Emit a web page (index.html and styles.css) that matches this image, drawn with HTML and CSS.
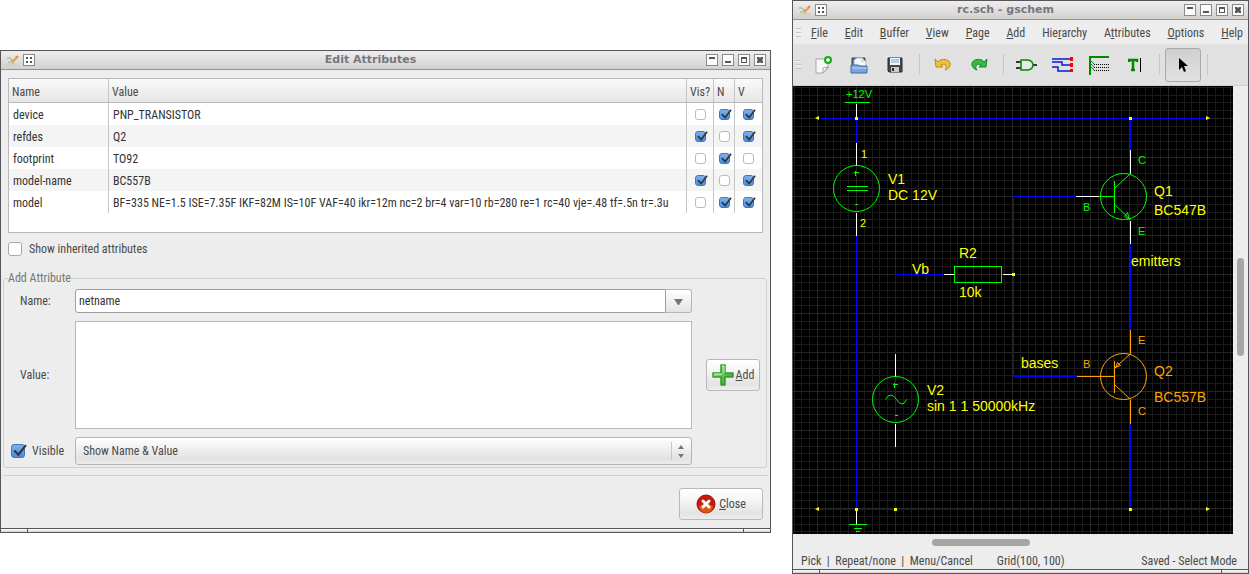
FILE: index.html
```html
<!DOCTYPE html>
<html lang="en">
<head>
  <meta charset="UTF-8">
  <meta name="viewport" content="width=device-width, initial-scale=1.0">
  <title>rc.sch - gschem</title>
  <link rel="stylesheet" href="styles.css">
</head>
<body>
  <!-- Shared icons -->
  <svg class="defs" width="0" height="0" aria-hidden="true">
    <symbol id="app-icon" viewBox="0 0 13 13">
      <path d="M1 2h10v9H1z" fill="#e4e2dc"/>
      <path d="M0 11l1-2h11l1 3H0z" fill="#d5d1c8"/>
      <path d="M1 4h3l2 2-2 2H2M6 6h2" fill="none" stroke="#9aae88"/>
      <path d="M6 9l5-6" stroke="#eaa04e" stroke-width="2"/>
      <path d="M10 4l2-2" stroke="#e08a5a" stroke-width="2"/>
    </symbol>
    <symbol id="win-menu" viewBox="0 0 10 10"><path d="M2 2h2v2H2zM6 2h2v2H6zM2 6h2v2H2zM6 6h2v2H6z" fill="#55565a"/></symbol>
    <symbol id="win-shade" viewBox="0 0 10 10"><path d="M2 2h6v2H2z" fill="#55565a"/></symbol>
    <symbol id="win-min" viewBox="0 0 10 10"><path d="M2 6h6v2H2z" fill="#55565a"/></symbol>
    <symbol id="win-max" viewBox="0 0 10 10"><path d="M2 2h6v6H2zM3 4v3h4V4z" fill="#55565a" fill-rule="evenodd"/></symbol>
    <symbol id="win-close" viewBox="0 0 10 10"><path d="M2 2h2l1 1 1-1h2v2L7 5l1 1v2H6L5 7 4 8H2V6l1-1-1-1z" fill="#55565a"/></symbol>
  </svg>

  <div class="desktop">
    <!-- Edit Attributes dialog -->
    <section class="window dialog">
      <header class="titlebar">
        <svg class="app-icon"><use href="#app-icon"/></svg>
        <button class="win-btn" aria-label="Window menu"><svg><use href="#win-menu"/></svg></button>
        <h1>Edit Attributes</h1>
        <button class="win-btn" aria-label="Shade"><svg><use href="#win-shade"/></svg></button>
        <button class="win-btn" aria-label="Minimize"><svg><use href="#win-min"/></svg></button>
        <button class="win-btn" aria-label="Maximize"><svg><use href="#win-max"/></svg></button>
        <button class="win-btn" aria-label="Close window"><svg><use href="#win-close"/></svg></button>
      </header>

      <div class="table-box">
        <table>
          <colgroup>
            <col class="col-name"><col><col class="col-vis"><col class="col-n"><col class="col-v">
          </colgroup>
          <thead>
            <tr><th>Name</th><th>Value</th><th>Vis?</th><th>N</th><th>V</th></tr>
          </thead>
          <tbody>
            <tr>
              <td>device</td><td>PNP_TRANSISTOR</td>
              <td class="tick"><input type="checkbox" aria-label="device visible"></td>
              <td class="tick"><input type="checkbox" aria-label="device name" checked></td>
              <td class="tick"><input type="checkbox" aria-label="device value" checked></td>
            </tr>
            <tr>
              <td>refdes</td><td>Q2</td>
              <td class="tick"><input type="checkbox" aria-label="refdes visible" checked></td>
              <td class="tick"><input type="checkbox" aria-label="refdes name"></td>
              <td class="tick"><input type="checkbox" aria-label="refdes value" checked></td>
            </tr>
            <tr>
              <td>footprint</td><td>TO92</td>
              <td class="tick"><input type="checkbox" aria-label="footprint visible"></td>
              <td class="tick"><input type="checkbox" aria-label="footprint name" checked></td>
              <td class="tick"><input type="checkbox" aria-label="footprint value"></td>
            </tr>
            <tr>
              <td>model-name</td><td>BC557B</td>
              <td class="tick"><input type="checkbox" aria-label="model-name visible" checked></td>
              <td class="tick"><input type="checkbox" aria-label="model-name name"></td>
              <td class="tick"><input type="checkbox" aria-label="model-name value" checked></td>
            </tr>
            <tr>
              <td>model</td><td>BF=335 NE=1.5 ISE=7.35F IKF=82M IS=10F VAF=40 ikr=12m nc=2 br=4 var=10 rb=280 re=1 rc=40 vje=.48 tf=.5n tr=.3u</td>
              <td class="tick"><input type="checkbox" aria-label="model visible"></td>
              <td class="tick"><input type="checkbox" aria-label="model name" checked></td>
              <td class="tick"><input type="checkbox" aria-label="model value" checked></td>
            </tr>
          </tbody>
        </table>
      </div>

      <label class="check inherited"><input type="checkbox"> Show inherited attributes</label>

      <fieldset>
        <legend>Add Attribute</legend>
        <div class="add-form">
          <label class="field-label" for="attr-name">Name:</label>
          <div class="combo field">
            <input type="text" id="attr-name" value="netname">
            <button aria-label="Show names"><svg width="9" height="6" viewBox="0 0 9 6"><path d="M0 0h9L5 6H4z" fill="#777"/></svg></button>
          </div>
          <label class="field-label" for="attr-value">Value:</label>
          <textarea class="field" id="attr-value"></textarea>
          <label class="check visible"><input type="checkbox" checked> Visible</label>
          <select class="field" aria-label="Show">
            <option>Show Name &amp; Value</option>
          </select>
          <button class="btn add-btn">
            <svg width="22" height="22" viewBox="0 0 22 22">
              <defs>
                <linearGradient id="plus" x1="0" y1="0" x2="1" y2="1">
                  <stop offset="0" stop-color="#b8ec9c"/><stop offset="1" stop-color="#179a17"/>
                </linearGradient>
              </defs>
              <path d="M9 1h4v8h8v4h-8v8H9v-8H1V9h8z" fill="url(#plus)" stroke="#2f9c2b" stroke-width="1.500" stroke-linejoin="round"/>
              <path d="M10 2h2v7M2 10h8" fill="none" stroke="#d2f5bd"/>
            </svg>
            <span><u>A</u>dd</span>
          </button>
        </div>
      </fieldset>

      <div class="actions">
        <button class="btn close-btn">
          <svg width="20" height="20" viewBox="0 0 20 20">
            <circle cx="10" cy="10" r="9" fill="#c7180c" stroke="#9c0d0d"/>
            <path d="M3 12a7 7 0 0 0 14 0q-7-4-14 0z" fill="#d8590d"/>
            <path d="M7 7l6 6M13 7l-6 6" stroke="#fff" stroke-width="3" stroke-linecap="round"/>
          </svg>
          <span><u>C</u>lose</span>
        </button>
      </div>
      <div class="grip"></div>
    </section>

    <!-- Schematic editor -->
    <section class="window editor">
      <header class="titlebar">
        <svg class="app-icon"><use href="#app-icon"/></svg>
        <button class="win-btn" aria-label="Window menu"><svg><use href="#win-menu"/></svg></button>
        <h1>rc.sch - gschem</h1>
        <button class="win-btn" aria-label="Shade"><svg><use href="#win-shade"/></svg></button>
        <button class="win-btn" aria-label="Minimize"><svg><use href="#win-min"/></svg></button>
        <button class="win-btn" aria-label="Maximize"><svg><use href="#win-max"/></svg></button>
        <button class="win-btn" aria-label="Close window"><svg><use href="#win-close"/></svg></button>
      </header>

      <nav class="menubar">
        <span class="handle"></span>
        <div class="menus">
          <button><u>F</u>ile</button>
          <button><u>E</u>dit</button>
          <button><u>B</u>uffer</button>
          <button><u>V</u>iew</button>
          <button><u>P</u>age</button>
          <button><u>A</u>dd</button>
          <button>Hie<u>r</u>archy</button>
          <button>A<u>t</u>tributes</button>
          <button><u>O</u>ptions</button>
          <button><u>H</u>elp</button>
        </div>
      </nav>

      <div class="toolbar">
        <span class="handle"></span>
        <button class="tool" aria-label="New">
          <svg width="18" height="18" viewBox="0 0 18 18">
            <path d="M2 3h12v9l-5 5H2z" fill="#f7f7f5" stroke="#a5a59f"/>
            <path d="M14 11l-5 1v5z" fill="#fff" stroke="#a5a59f"/>
            <circle cx="14" cy="4" r="4" fill="#1faa1f"/>
            <path d="M14 2v4M12 4h4" stroke="#fff" stroke-width="1.5"/>
          </svg>
        </button>
        <button class="tool" aria-label="Open">
          <svg width="18" height="18" viewBox="0 0 18 18">
            <path d="M2 2h13v10H2z" fill="#3c6396" stroke="#2a4a78"/>
            <path d="M4 4l3-2h5l4 4v5H4z" fill="#f5f6f8" stroke="#b4bac4"/>
            <path d="M11 2v4h4z" fill="#d6dae0"/>
            <path d="M1 9h7l2 1h7v7H1z" fill="#7ba6d8" stroke="#3c6ba6"/>
            <path d="M2 12h15" stroke="#c3d9f1"/>
          </svg>
        </button>
        <button class="tool" aria-label="Save">
          <svg width="16" height="16" viewBox="0 0 16 16">
            <path d="M1 1h14v14H2l-1-1z" fill="#45474f" stroke="#2c2d33"/>
            <path d="M3 1h10v7H3z" fill="#f1f4f8"/>
            <path d="M4 3h8M4 5h8" stroke="#7ea2d4"/>
            <path d="M4 10h8v5H4z" fill="#c9cacc"/>
            <path d="M5 11h2v3H5z" fill="#2c2d33"/>
          </svg>
        </button>
        <span class="sep"></span>
        <button class="tool" aria-label="Undo">
          <svg width="18" height="16" viewBox="0 0 18 16">
            <path d="M1 2l1 8h7L7 8q4-2 5 1 1 2-1 4 6-2 5-7-2-5-10-3L4 5z" fill="#edc13c" stroke="#b98a16" stroke-linejoin="round"/>
          </svg>
        </button>
        <button class="tool" aria-label="Redo">
          <svg width="18" height="16" viewBox="0 0 18 16">
            <path d="M17 2l-1 8H9l2-2Q7 6 6 9q-1 2 1 4Q1 11 2 6q2-5 10-3l2 2z" fill="#38b945" stroke="#15882a" stroke-linejoin="round"/>
          </svg>
        </button>
        <span class="sep"></span>
        <button class="tool" aria-label="Add component">
          <svg width="22" height="14" viewBox="0 0 22 14">
            <path d="M0 4h5M0 10h5M16 7h5" stroke="#000" stroke-width="1.5"/>
            <path d="M5 2h7q5 1 5 5t-5 5H5z" fill="#e8e8e8" stroke="#008a00" stroke-width="1.5"/>
          </svg>
        </button>
        <button class="tool" aria-label="Add net">
          <svg width="22" height="18" viewBox="0 0 22 18">
            <path d="M0 3h18M0 6h10v3h8M0 11h6v4h12" fill="none" stroke="#0a18d8" stroke-width="1.5"/>
            <path d="M18 1h3v4h-3zM18 7h3v4h-3zM18 13h3v3h-3z" fill="#f00"/>
          </svg>
        </button>
        <button class="tool" aria-label="Add bus">
          <svg width="22" height="20" viewBox="0 0 22 20">
            <path d="M2 20V2h19" fill="none" stroke="#008a00" stroke-width="2"/>
            <path d="M3 6l3 3M3 9l3 3M3 12l3 3" stroke="#008a00"/>
            <path d="M6 9.5h15M6 12.5h15M6 15.5h15" stroke="#000" stroke-dasharray="1 1"/>
          </svg>
        </button>
        <button class="tool" aria-label="Add text">
          <svg width="14" height="16" viewBox="0 0 14 16">
            <path d="M1 5V3h8v2M5 3v10M3 13h4" fill="none" stroke="#008a00" stroke-width="2.5"/>
            <path d="M12.500 1v14" stroke="#000"/>
          </svg>
        </button>
        <span class="sep"></span>
        <button class="tool active" aria-label="Select mode">
          <svg width="12" height="16" viewBox="0 0 12 16">
            <path d="M2 1v12l3-3 2 5 2-1-2-5h4z" fill="#000"/>
          </svg>
        </button>
        <span class="sep"></span>
      </div>

      <div class="workspace">
        <svg class="schematic">
          <defs>
            <pattern id="grid" x="24" y="32" width="39" height="39" patternUnits="userSpaceOnUse">
              <path class="grid-minor" d="M8 0h1v39h-1zM16 0h1v39h-1zM23 0h1v39h-1zM31 0h1v39h-1zM0 8h39v1H0zM0 16h39v1H0zM0 23h39v1H0zM0 31h39v1H0z"/>
              <path class="grid-major" d="M0 0h39v1H0zM0 0h1v39H0z"/>
            </pattern>
          </defs>
          <rect width="100%" height="100%" fill="url(#grid)"/>

          <g transform="translate(.5 .5)">
            <!-- Nets -->
            <path class="net" d="M24 32H414"/>
            <path class="net" d="M63 32V56"/>
            <path class="net" d="M63 149V423"/>
            <path class="net" d="M24 423H414"/>
            <path class="net" d="M102 360V423"/>
            <path class="net" d="M102 267V188H150"/>
            <path class="net" d="M282 110H220V290H283"/>
            <path class="net" d="M337 32V63"/>
            <path class="net" d="M337 157V243"/>
            <path class="net" d="M337 337V423"/>

            <!-- Pins -->
            <path class="pin" d="M63 17V32M63 56V79M63 126V149M63 423V438M102 267V290M102 337V360M150 188H161M209 188H220M282 110H305M337 63V87M337 134V157"/>

            <!-- Component bodies -->
            <path class="part" d="M51 16H76M55 438H73M60 442H68M62 445H66M53 100H74M53 104H74M60 86H65M62 84V89M61 118H64M99 298H104M101 296V301M101 329H104M161 180H208V196H161ZM305 110H321M321 94V126"/>
            <g class="part smooth">
              <circle cx="63" cy="102" r="23"/>
              <circle cx="102" cy="313" r="23"/>
              <path d="M92 313q5-9 11 0t10 0"/>
              <circle cx="330" cy="110" r="23"/>
              <path d="M321 102L337 87M321 118L337 133M331 130l3-4 2 7z"/>
            </g>

            <!-- Selected transistor -->
            <path class="part selected" d="M337 243V267M283 290H321M321 274V306M337 313V337"/>
            <g class="part selected smooth">
              <circle cx="330" cy="290" r="23"/>
              <path d="M337 267L321 282M321 298L337 313M322 281l2-5 3 3z"/>
            </g>
          </g>

          <!-- Junctions and net ends -->
          <path class="junction" d="M62 31h3v3h-3zM336 31h3v3h-3zM62 422h3v3h-3zM101 422h3v3h-3zM336 422h3v3h-3zM219 187h3v3h-3z"/>
          <path class="junction" d="M22 32l4-2v4zM417 32l-4-2v4zM22 423l4-2v4zM417 423l-4-2v4z"/>

          <g class="pin-text">
            <text class="green" x="53" y="12">+12V</text>
            <text x="68" y="72">1</text>
            <text x="67" y="141">2</text>
            <text class="green" x="345" y="78">C</text>
            <text class="green" x="290" y="125">B</text>
            <text class="green" x="345" y="149">E</text>
            <text class="orange" x="345" y="258">E</text>
            <text class="orange" x="290" y="282">B</text>
            <text class="orange" x="345" y="329">C</text>
          </g>
          <g class="part-text">
            <text x="95" y="98">V1</text>
            <text x="95" y="114">DC 12V</text>
            <text x="166" y="172">R2</text>
            <text x="119" y="188">Vb</text>
            <text x="166" y="211">10k</text>
            <text x="361" y="110">Q1</text>
            <text x="361" y="129">BC547B</text>
            <text x="338" y="180">emitters</text>
            <text x="228" y="282">bases</text>
            <text x="134" y="309">V2</text>
            <text x="134" y="325">sin 1 1 50000kHz</text>
            <text class="orange" x="361" y="290">Q2</text>
            <text class="orange" x="361" y="316">BC557B</text>
          </g>
        </svg>
        <div class="scroll-v"><span class="thumb"></span></div>
      </div>
      <div class="scroll-h"><span class="thumb"></span></div>

      <footer class="statusbar">
        <span>Pick&nbsp; |&nbsp; Repeat/none&nbsp; |&nbsp; Menu/Cancel</span>
        <span>Grid(100, 100)</span>
        <span class="mode">Saved - Select Mode</span>
      </footer>
      <div class="grip"></div>
    </section>
  </div>
</body>
</html>
```
FILE: styles.css
```css
* {
  box-sizing: border-box;
}

body {
  margin: 0;
  background-color: #fff;
  color: #4a4a4a;
  font-family: "Ubuntu Condensed", "Roboto Condensed", Roboto, sans-serif;
  font-size: 12px;
  line-height: 16px;
}

button,
input,
select,
textarea {
  font: inherit;
  color: inherit;
  margin: 0;
}

.defs {
  position: absolute;
}

.desktop {
  display: flex;
  align-items: flex-start;
  gap: 21px;
}

/* Windows */
.window {
  min-width: 0;
  background-color: #ededed;
  border: 1px solid #55565c;
}

.dialog {
  flex: 769 1 0;
  margin-top: 50px;
}

.editor {
  flex: 455 1 0;
}

.titlebar {
  display: flex;
  align-items: center;
  gap: 4px;
  height: 19px;
  padding: 0 4px 0 5px;
  background: linear-gradient(#efeeed, #d3d1ce);
  border-bottom: 1px solid #929297;
}

.titlebar h1 {
  flex: 1;
  margin: 0;
  text-align: center;
  color: #74777f;
  font-family: "DejaVu Sans", sans-serif;
  font-size: 11px;
  font-weight: bold;
}

.app-icon {
  width: 13px;
  height: 13px;
}

.win-btn {
  display: flex;
  width: 12px;
  height: 12px;
  padding: 0;
  border: 1px solid #8d8a84;
  background-color: #fbfbfb;
}

.win-btn svg {
  width: 10px;
  height: 10px;
}

.grip {
  height: 4px;
  border-top: 1px solid #55565c;
  background: linear-gradient(#fff, #d3d3d6);
  display: flex;
  justify-content: space-between;
}

.grip::before,
.grip::after {
  content: "";
  width: 26px;
  border-right: 1px solid #55565c;
}

.grip::after {
  border-right: none;
  border-left: 1px solid #55565c;
}

/* Check boxes */
input[type="checkbox"] {
  appearance: none;
  position: relative;
  display: block;
  flex: none;
  width: 14px;
  height: 14px;
  border: 1px solid #a9a9a9;
  border-radius: 3px;
  background-color: #fff;
}

input[type="checkbox"]:checked {
  border-color: #3c78bf;
  background: linear-gradient(#7db1ee, #4a8ddb);
}

input[type="checkbox"]:checked::after {
  content: "";
  position: absolute;
  inset: -1px -3px -1px 0;
  background: url("data:image/svg+xml,%3Csvg xmlns='http://www.w3.org/2000/svg' viewBox='0 0 14 13'%3E%3Cpath d='M2 6l4 4 7-9' fill='none' stroke='%23333' stroke-width='2'/%3E%3C/svg%3E") center / 100% 100% no-repeat;
}

.check {
  display: flex;
  align-items: center;
  gap: 7px;
}

/* Attribute table */
.table-box {
  min-height: 155px;
  margin: 8px 7px 0;
  border: 1px solid #b9b9b9;
  background-color: #fff;
}

table {
  width: 100%;
  table-layout: fixed;
  border-collapse: separate;
  border-spacing: 0;
}

.col-name {
  width: 100px;
}

.col-vis,
.col-v {
  width: 27px;
}

.col-n {
  width: 21px;
}

th {
  height: 24px;
  padding: 2px 0 0 3px;
  text-align: left;
  font-weight: normal;
  background: linear-gradient(#fafafa, #e6e6e6);
  border-right: 1px solid #c6c6c6;
  border-bottom: 1px solid #b9b9b9;
}

td {
  height: 22px;
  padding: 2px 0 0 4px;
  color: #333;
  white-space: nowrap;
  overflow: hidden;
  border-right: 1px solid #c6c6c6;
}

th:last-child,
td:last-child {
  border-right: none;
}

tbody tr:nth-child(even) {
  background-color: #f4f4f4;
}

td.tick {
  padding: 0;
  overflow: visible;
}

td.tick input {
  width: 11px;
  height: 11px;
  margin: 0 auto;
  border-color: #bbb;
}

.inherited {
  height: 15px;
  margin: 8px 7px 14px;
}

/* Add attribute form */
fieldset {
  margin: 0 3px 0 2px;
  padding: 3px 6px 2px 0;
  border: 1px solid #d0d0d0;
  border-radius: 3px;
}

legend {
  margin-left: 4px;
  padding: 0;
  color: #777;
}

.add-form {
  display: grid;
  grid-template-columns: 71px 1fr 54px;
  grid-template-rows: 24px 108px 28px;
  row-gap: 8px;
  align-items: center;
}

.field-label,
.check.visible {
  grid-column: 1;
}

.field {
  grid-column: 2;
  margin-right: 14px;
}

.field-label {
  padding-left: 16px;
}

.visible {
  padding-left: 7px;
}

.combo {
  display: flex;
  height: 24px;
}

.combo input {
  flex: 1;
  min-width: 0;
  padding: 0 3px;
  color: #333;
  background-color: #fff;
  border: 1px solid #9e9e9e;
  border-radius: 3px 0 0 3px;
}

.combo button {
  width: 26px;
  padding: 0;
  border: 1px solid #b5b5b5;
  border-left: none;
  border-radius: 0 3px 3px 0;
  background: linear-gradient(#fff, #e4e4e4);
}

textarea {
  height: 108px;
  border: 1px solid #b9b9b9;
  background-color: #fff;
  resize: none;
}

select {
  appearance: none;
  height: 28px;
  padding: 0 28px 0 7px;
  border: 1px solid #b5b5b5;
  border-radius: 3px;
  background:
    url("data:image/svg+xml,%3Csvg xmlns='http://www.w3.org/2000/svg' width='20' height='20'%3E%3Cpath d='M0 1h1v18H0z' fill='%23c8c8c8'/%3E%3Cpath d='M7 8l3-4 3 4zM7 13l3 4 3-4z' fill='%23777'/%3E%3C/svg%3E") right center no-repeat,
    linear-gradient(#fff, #e2e2e2 80%, #ececec);
}

.btn {
  display: flex;
  align-items: center;
  justify-content: center;
  height: 32px;
  padding: 0;
  border: 1px solid #b9b9b9;
  border-radius: 3px;
  background: linear-gradient(#fff, #f4f4f4 40%, #e3e3e3 80%, #ededed);
}

.add-btn {
  grid-column: 3;
  grid-row: 2;
  gap: 2px;
}

.close-btn {
  width: 84px;
  gap: 3px;
}

.actions {
  display: flex;
  justify-content: flex-end;
  margin: 7px 2px 0;
  padding: 12px 5px 8px;
  border-top: 1px solid #d0d0d0;
}

/* Menu bar and toolbar */
.handle {
  flex: none;
  width: 5px;
  height: 9px;
  margin: 0 4px 0 3px;
  background: repeating-linear-gradient(#c4c4c4 0 1px, #f6f6f6 1px 2px, transparent 2px 4px);
}

.menubar {
  display: flex;
  align-items: center;
  height: 24px;
}

.menus {
  flex: 1;
  display: flex;
  justify-content: space-between;
  padding: 2px 5px 0 6px;
}

.menus button {
  padding: 0;
  border: none;
  background: none;
}

.toolbar {
  display: flex;
  align-items: center;
  height: 42px;
  background-color: #e1e1e1;
  border-bottom: 1px solid #cfcfcf;
}

.tool {
  display: flex;
  align-items: center;
  justify-content: center;
  flex: none;
  width: 36px;
  height: 34px;
  padding: 0;
  border: 1px solid transparent;
  border-radius: 3px;
  background: none;
}

.tool.active {
  border-color: #a8a8a8;
  background: linear-gradient(#cfcfcf, #e2e2e2);
}

.sep {
  flex: none;
  width: 12px;
  height: 21px;
  background: linear-gradient(#c6c6c6, #c6c6c6) center / 1px 100% no-repeat;
}

/* Schematic */
.workspace {
  display: flex;
  height: 448px;
}

.schematic {
  flex: 1;
  min-width: 0;
  height: 100%;
  background-color: #000;
}

.grid-minor {
  fill: #1b1b1b;
}

.grid-major {
  fill: #272727;
}

.net,
.pin,
.part {
  fill: none;
  stroke-width: 1px;
  shape-rendering: crispEdges;
}

.net {
  stroke: #00f;
}

.pin {
  stroke: #fff;
}

.part {
  stroke: #0f0;
}

.selected {
  stroke: #ffa500;
}

.smooth {
  shape-rendering: auto;
}

.junction {
  fill: #ff0;
}

.pin-text,
.part-text {
  fill: #ff0;
  font-family: "Liberation Sans", Arial, sans-serif;
}

.pin-text {
  font-size: 11px;
}

.part-text {
  font-size: 14px;
}

.green {
  fill: #0f0;
}

.orange {
  fill: #ffa500;
}

.scroll-v {
  width: 15px;
  padding: 172px 4px 0;
}

.scroll-v .thumb {
  display: block;
  height: 98px;
  border-radius: 4px;
  background-color: #a6a6a6;
}

.scroll-h {
  height: 16px;
  padding: 5px 0 0 139px;
}

.scroll-h .thumb {
  display: block;
  width: 98px;
  height: 7px;
  border-radius: 4px;
  background-color: #a6a6a6;
}

.statusbar {
  display: flex;
  align-items: center;
  gap: 24px;
  height: 19px;
  padding: 2px 11px 0 8px;
}

.mode {
  margin-left: auto;
}
```
